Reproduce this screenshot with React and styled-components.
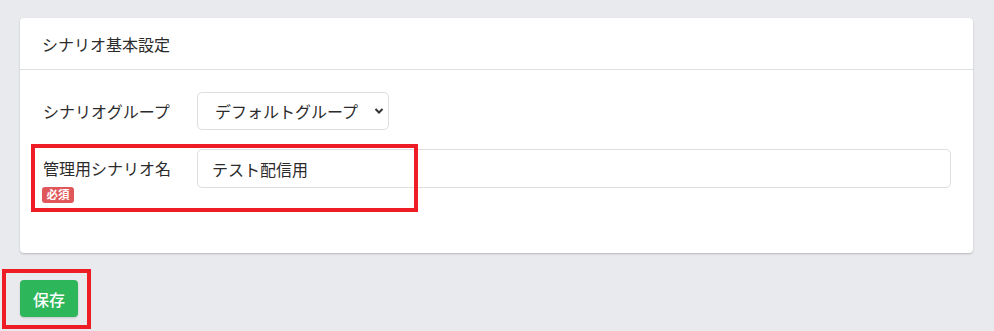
import React from "react";
import styled, { createGlobalStyle } from "styled-components";

const Global = createGlobalStyle`
  html, body { margin: 0; padding: 0; background: #e9eaed; }
  body { font-family: "Noto Sans CJK JP", "Noto Sans", sans-serif; color: #333; }
  * { box-sizing: border-box; }
`;

const Page = styled.div`
  padding: 18px 21px 0 20px;
  width: 994px;
  height: 331px;
  overflow: hidden;
`;

const Card = styled.section`
  background: #fff;
  border-radius: 4px;
  box-shadow: 0 1px 2px rgba(0, 0, 0, 0.22);
  height: 235px;
  display: flex;
  flex-direction: column;
`;

const CardHeader = styled.div`
  height: 52px;
  padding: 0 22px;
  display: flex;
  align-items: center;
  font-size: 16px;
  color: #2b2b2b;
  border-bottom: 1px solid #dedfe1;
`;

const CardBody = styled.div`
  padding: 22px 22px 0 22px;
  display: flex;
  flex-direction: column;
  gap: 19px;
`;

const Row = styled.div`
  position: relative;
  display: flex;
  align-items: flex-start;
`;

const LabelCol = styled.div`
  width: 155px;
  flex: none;
  display: flex;
  flex-direction: column;
  align-items: flex-start;
`;

const Label = styled.div`
  font-size: 16px;
  line-height: 38px;
  color: #2b2b2b;
  padding-left: 1px;
`;

const Badge = styled.span`
  display: inline-flex;
  align-items: center;
  justify-content: center;
  width: 32px;
  height: 16px;
  border-radius: 3px;
  background: #e0575b;
  color: #fff;
  font-size: 11.5px;
  font-weight: 700;
  line-height: 1;
`;

const SelectWrap = styled.div`
  position: relative;
  width: 192px;
  height: 38px;
`;

const Select = styled.select`
  appearance: none;
  width: 100%;
  height: 100%;
  border: 1px solid #dcdee2;
  border-radius: 5px;
  background: #fff;
  padding: 0 30px 0 17px;
  font-family: inherit;
  font-size: 16px;
  color: #2b2b2b;
  outline: none;
`;

const Chevron = styled.svg`
  position: absolute;
  right: 5px;
  top: 15px;
  pointer-events: none;
`;

const Input = styled.input`
  flex: 1;
  height: 39px;
  border: 1px solid #dcdee2;
  border-radius: 5px;
  padding: 0 14px;
  font-family: inherit;
  font-size: 16px;
  color: #2b2b2b;
  outline: none;
  background: #fff;
`;

const Highlight = styled.div`
  position: absolute;
  border: 4px solid #ee1c25;
  pointer-events: none;
  left: ${(p) => p.$left}px;
  top: ${(p) => p.$top}px;
  width: ${(p) => p.$width}px;
  height: ${(p) => p.$height}px;
`;

const Footer = styled.div`
  padding-top: 27px;
`;

const ButtonWrap = styled.div`
  position: relative;
  display: inline-block;
`;

const SaveButton = styled.button`
  width: 58px;
  height: 37px;
  border: none;
  border-radius: 4px;
  background: #2db75a;
  color: #fff;
  font-family: inherit;
  font-size: 16px;
  font-weight: 500;
  box-shadow: 0 1px 2px rgba(0, 0, 0, 0.15);
  cursor: pointer;
`;

export default function App() {
  return (
    <>
      <Global />
      <Page>
        <Card>
          <CardHeader>シナリオ基本設定</CardHeader>
          <CardBody>
            <Row>
              <LabelCol>
                <Label>シナリオグループ</Label>
              </LabelCol>
              <SelectWrap>
                <Select defaultValue="default">
                  <option value="default">デフォルトグループ</option>
                </Select>
                <Chevron width="10" height="8" viewBox="0 0 10 8">
                  <path d="M1.5 2 L5 5.5 L8.5 2" fill="none" stroke="#333" strokeWidth="2" />
                </Chevron>
              </SelectWrap>
            </Row>
            <Row>
              <LabelCol>
                <Label>管理用シナリオ名</Label>
                <Badge>必須</Badge>
              </LabelCol>
              <Input defaultValue="テスト配信用" />
              <Highlight $left={-11} $top={-5} $width={387} $height={68} />
            </Row>
          </CardBody>
        </Card>
        <Footer>
          <ButtonWrap>
            <SaveButton>保存</SaveButton>
            <Highlight $left={-18} $top={-11} $width={89} $height={60} />
          </ButtonWrap>
        </Footer>
      </Page>
    </>
  );
}
